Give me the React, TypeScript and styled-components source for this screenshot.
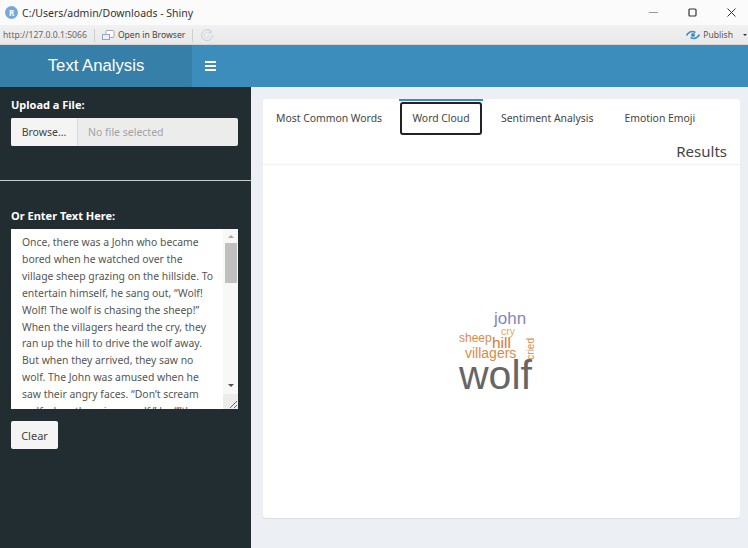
import React from 'react';
import styled, { createGlobalStyle } from 'styled-components';

const storyLines = [
  'Once, there was a John who became',
  'bored when he watched over the',
  'village sheep grazing on the hillside. To',
  'entertain himself, he sang out, “Wolf!',
  'Wolf! The wolf is chasing the sheep!”',
  'When the villagers heard the cry, they',
  'ran up the hill to drive the wolf away.',
  'But when they arrived, they saw no',
  'wolf. The John was amused when he',
  'saw their angry faces. “Don’t scream',
  'wolf when there is no wolf,” he “”the',
];

const tabs = ['Most Common Words', 'Word Cloud', 'Sentiment Analysis', 'Emotion Emoji'];

const cloudWords = [
  { text: 'john', x: 35, y: 0, size: 17, color: '#8784bd' },
  { text: 'cry', x: 42, y: 16, size: 10.5, color: '#e6a65c' },
  { text: 'sheep', x: 0, y: 22, size: 12, color: '#dc8a45' },
  { text: 'hill', x: 33, y: 25, size: 15.5, color: '#d9782f' },
  { text: 'villagers', x: 6, y: 36, size: 14, color: '#dc8a45' },
  { text: 'wolf', x: 0, y: 45, size: 41, color: '#666666' },
];

const GlobalStyle = createGlobalStyle`
  html, body {
    margin: 0;
    padding: 0;
    background: #ecf0f5;
    font-family: "Noto Sans", "Liberation Sans", sans-serif;
  }
  * {
    box-sizing: border-box;
  }
`;

const Page = styled.div`
  width: 748px;
  height: 548px;
  display: flex;
  flex-direction: column;
  overflow: hidden;
`;

const TitleBar = styled.div`
  height: 25px;
  background: #fbfbfc;
  display: flex;
  align-items: center;
  padding-left: 5px;
  color: #333;
  font-size: 10.5px;
`;

const RLogo = styled.div`
  width: 13px;
  height: 13px;
  border-radius: 50%;
  background: #75a9dc;
  color: #fff;
  font-size: 8px;
  font-weight: 700;
  display: flex;
  align-items: center;
  justify-content: center;
  margin-right: 4px;
`;

const WindowTitle = styled.span`
  flex: 1;
`;

const WindowButton = styled.div`
  width: 39px;
  height: 25px;
  padding-left: 5px;
  display: flex;
  align-items: center;
  justify-content: center;
`;

const ToolBar = styled.div`
  height: 20px;
  background: linear-gradient(#f1f1f2, #e9e9ea);
  border-bottom: 1px solid #d6d6d6;
  display: flex;
  align-items: center;
  padding: 1px 0 0 3px;
  color: #666;
  font-size: 8.6px;
`;

const Divider = styled.div`
  width: 1px;
  height: 13px;
  background: #cfcfcf;
  margin: 0 7px 0 7px;
`;

const OpenLabel = styled.span`
  color: #444;
  margin-left: 3px;
`;

const PublishBox = styled.div`
  margin-left: auto;
  display: flex;
  align-items: center;
  gap: 3px;
  padding-right: 1px;
  color: #555;
`;

const Caret = styled.span`
  width: 0;
  height: 0;
  border-left: 2px solid transparent;
  border-right: 2px solid transparent;
  border-top: 2px solid #333;
  margin-left: 7px;
`;

const Header = styled.header`
  height: 42px;
  background: #3c8dbc;
  display: flex;
  flex-shrink: 0;
`;

const Logo = styled.div`
  width: 192px;
  background: #367fa9;
  color: #fff;
  font-family: "Liberation Sans", sans-serif;
  font-size: 16.7px;
  padding-bottom: 1px;
  display: flex;
  align-items: center;
  justify-content: center;
`;

const Burger = styled.div`
  width: 11px;
  margin-left: 13px;
  align-self: center;
  display: flex;
  flex-direction: column;
  gap: 2px;
  span {
    height: 2px;
    background: #fff;
  }
`;

const Main = styled.div`
  flex: 1;
  display: flex;
  min-height: 0;
`;

const Sidebar = styled.aside`
  width: 251px;
  background: #222d32;
  padding-top: 10px;
  flex-shrink: 0;
`;

const Section = styled.div`
  padding: 0 13px 0 11px;
`;

const FieldLabel = styled.label`
  display: block;
  color: #fff;
  font-size: 11px;
  font-weight: 700;
  line-height: 15px;
  margin-bottom: 6px;
`;

const FileInput = styled.div`
  height: 28px;
  display: flex;
  font-size: 10.5px;
  background: #ececec;
  border-radius: 2px;
`;

const BrowseButton = styled.div`
  width: 67px;
  background: #f4f4f4;
  color: #444;
  border-right: 1px solid #dadada;
  border-radius: 2px 0 0 2px;
  padding-bottom: 1px;
  display: flex;
  align-items: center;
  justify-content: center;
`;

const FileName = styled.div`
  flex: 1;
  color: #a3a3a3;
  padding: 0 0 1px 10px;
  display: flex;
  align-items: center;
`;

const SideRule = styled.hr`
  border: 0;
  border-top: 1px solid #c4cccc;
  margin: 34px 0 27px;
`;

const TextBox = styled.div`
  height: 180px;
  background: #fff;
  display: flex;
  overflow: hidden;
`;

const StoryText = styled.div`
  flex: 1;
  height: 180px;
  overflow: hidden;
  padding: 5px 0 0 11px;
  color: #555;
  font-size: 10.4px;
  line-height: 16.9px;
  white-space: nowrap;
`;

const StoryLine = styled.div``;

const ScrollTrack = styled.div`
  width: 15px;
  background: #f8f8f8;
  display: flex;
  flex-direction: column;
  align-items: center;
`;

const ArrowUp = styled.span`
  margin: 6px 0 5px;
  width: 0;
  height: 0;
  border-left: 3px solid transparent;
  border-right: 3px solid transparent;
  border-bottom: 3px solid #a8a8a8;
`;

const Thumb = styled.div`
  width: 12px;
  height: 40px;
  background: #c0c0c0;
`;

const ArrowDown = styled.span`
  margin-top: auto;
  margin-bottom: 7px;
  width: 0;
  height: 0;
  border-left: 3px solid transparent;
  border-right: 3px solid transparent;
  border-top: 3px solid #505050;
`;

const ResizeGrip = styled.div`
  width: 15px;
  height: 15px;
  background: #ececec;
  display: flex;
  align-items: flex-end;
  justify-content: flex-end;
`;

const ClearButton = styled.button`
  display: block;
  width: 47px;
  height: 28px;
  margin-top: 12px;
  background: #f4f4f4;
  border: 0;
  border-radius: 2px;
  color: #444;
  font-family: inherit;
  font-size: 11px;
  padding: 0;
`;

const Content = styled.main`
  flex: 1;
  padding: 12px 8px 30px 12px;
`;

const Card = styled.section`
  height: 100%;
  background: #fff;
  border-radius: 3px;
  box-shadow: 0 1px 1px rgba(0, 0, 0, 0.08);
  display: flex;
  flex-direction: column;
`;

const TabRow = styled.nav`
  display: flex;
  height: 36px;
  padding-left: 3px;
  flex-shrink: 0;
`;

const Tab = styled.div<{ $active?: boolean }>`
  padding: 0 10px;
  margin-right: ${(p) => (p.$active ? 8 : 11)}px;
  display: flex;
  align-items: center;
  font-size: 10.4px;
  color: #444;
  position: relative;
  border-top: 2px solid ${(p) => (p.$active ? '#3c8dbc' : 'transparent')};
  &:first-child {
    margin-right: 7px;
  }
  ${(p) =>
    p.$active &&
    `
    width: 84px;
    justify-content: center;
    &::after {
      content: '';
      position: absolute;
      inset: 1px 1px 0 1px;
      border: 2px solid #222;
      border-radius: 3px;
    }
  `}
`;

const ResultsHeader = styled.div`
  height: 30px;
  border-bottom: 1px solid #f2f2f2;
  padding: 2px 13px 0 0;
  text-align: right;
  color: #444;
  font-size: 15px;
  line-height: 28px;
  flex-shrink: 0;
`;

const CloudArea = styled.div`
  flex: 1;
  display: flex;
  align-items: flex-start;
  padding: 145px 0 0 196px;
`;

const Cloud = styled.div`
  position: relative;
  width: 80px;
  height: 90px;
  font-family: "Liberation Sans", sans-serif;
`;

const CloudWord = styled.span<{ $x: number; $y: number; $size: number; $color: string }>`
  position: absolute;
  left: ${(p) => p.$x}px;
  top: ${(p) => p.$y}px;
  font-size: ${(p) => p.$size}px;
  color: ${(p) => p.$color};
  line-height: 1;
`;

const CriedWord = styled.span`
  position: absolute;
  left: 67px;
  top: 28px;
  font-size: 10px;
  line-height: 1;
  color: #d98a4a;
  writing-mode: vertical-rl;
  transform: rotate(180deg);
`;

const App = () => {
  return (
    <Page>
      <GlobalStyle />
      <TitleBar>
        <RLogo>R</RLogo>
        <WindowTitle>C:/Users/admin/Downloads - Shiny</WindowTitle>
        <WindowButton>
          <svg width="9" height="9" viewBox="0 0 9 9">
            <path d="M0 4.5H9" stroke="#999" strokeWidth="1" />
          </svg>
        </WindowButton>
        <WindowButton>
          <svg width="9" height="9" viewBox="0 0 9 9">
            <rect x="1" y="1" width="7" height="7" rx="1" fill="none" stroke="#333" strokeWidth="1.2" />
          </svg>
        </WindowButton>
        <WindowButton>
          <svg width="9" height="9" viewBox="0 0 9 9">
            <path d="M0.5 0.5L8.5 8.5M8.5 0.5L0.5 8.5" stroke="#333" strokeWidth="1" />
          </svg>
        </WindowButton>
      </TitleBar>
      <ToolBar>
        <span>http://127.0.0.1:5066</span>
        <Divider />
        <svg width="13" height="10" viewBox="0 0 13 10">
          <rect x="4" y="0.5" width="8" height="7" rx="1" fill="#fff" stroke="#a9a9a9" />
          <rect x="0.5" y="4.5" width="7" height="5" fill="#eaf1f8" stroke="#8fa9c4" />
        </svg>
        <OpenLabel>Open in Browser</OpenLabel>
        <Divider />
        <svg width="14" height="14" viewBox="0 0 14 14">
          <path d="M11.5 4A5.5 5.5 0 1 0 12.5 7" fill="none" stroke="#c2cfdc" strokeWidth="1" />
          <path d="M9 1.5L11.7 4L9 5.5" fill="none" stroke="#c2cfdc" strokeWidth="1" />
          <path d="M9 5A2.8 2.8 0 1 0 9.8 7" fill="none" stroke="#d5dee7" strokeWidth="1" />
        </svg>
        <PublishBox>
          <svg width="14" height="10" viewBox="0 0 14 10">
            <path d="M0.5 5.5C3 1.5 6 0.5 9.5 2.5M13.5 4.5C11 8.5 8 9.5 4.5 7.5" fill="none" stroke="#3e8fc9" strokeWidth="1.6" />
            <circle cx="7" cy="5" r="2" fill="#3e8fc9" />
          </svg>
          <span>Publish</span>
          <Caret />
        </PublishBox>
      </ToolBar>
      <Header>
        <Logo>Text Analysis</Logo>
        <Burger>
          <span />
          <span />
          <span />
        </Burger>
      </Header>
      <Main>
        <Sidebar>
          <Section>
            <FieldLabel>Upload a File:</FieldLabel>
            <FileInput>
              <BrowseButton>Browse...</BrowseButton>
              <FileName>No file selected</FileName>
            </FileInput>
          </Section>
          <SideRule />
          <Section>
            <FieldLabel>Or Enter Text Here:</FieldLabel>
            <TextBox>
              <StoryText>
                {storyLines.map((line) => (
                  <StoryLine key={line}>{line}</StoryLine>
                ))}
              </StoryText>
              <ScrollTrack>
                <ArrowUp />
                <Thumb />
                <ArrowDown />
                <ResizeGrip>
                  <svg width="9" height="9" viewBox="0 0 9 9">
                    <path d="M1 8L8 1M5 8L8 5" stroke="#666" strokeWidth="1" />
                  </svg>
                </ResizeGrip>
              </ScrollTrack>
            </TextBox>
            <ClearButton>Clear</ClearButton>
          </Section>
        </Sidebar>
        <Content>
          <Card>
            <TabRow>
              {tabs.map((tab) => (
                <Tab key={tab} $active={tab === 'Word Cloud'}>
                  {tab}
                </Tab>
              ))}
            </TabRow>
            <ResultsHeader>Results</ResultsHeader>
            <CloudArea>
              <Cloud>
                {cloudWords.map((w) => (
                  <CloudWord key={w.text} $x={w.x} $y={w.y} $size={w.size} $color={w.color}>
                    {w.text}
                  </CloudWord>
                ))}
                <CriedWord>cried</CriedWord>
              </Cloud>
            </CloudArea>
          </Card>
        </Content>
      </Main>
    </Page>
  );
};

export default App;
